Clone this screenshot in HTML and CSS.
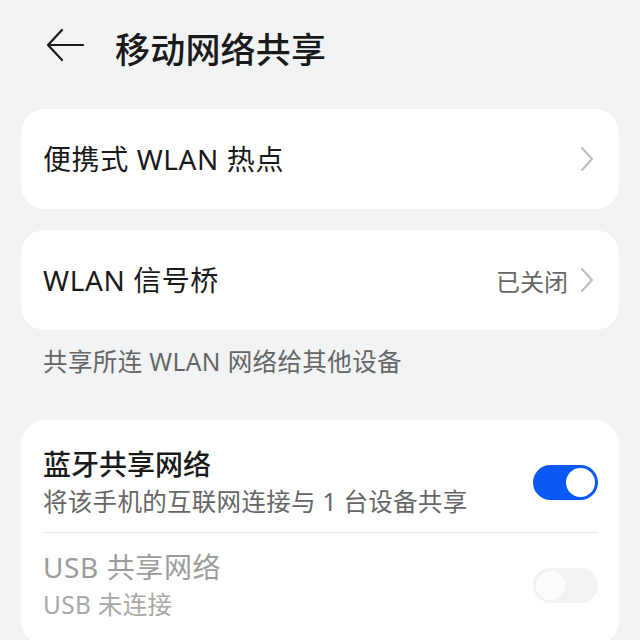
FILE: index.html
```html
<!DOCTYPE html>
<html lang="zh-CN">
<head>
  <meta charset="UTF-8">
  <meta name="viewport" content="width=device-width, initial-scale=1.0">
  <title>移动网络共享</title>
  <link rel="stylesheet" href="styles.css">
</head>
<body>
<div class="page">
  <header class="topbar">
    <svg class="back" width="38" height="36" viewBox="0 0 38 36">
      <path d="M16 2 L2 17 L16 32 M2 17 H37" fill="none" stroke="#1a1a1a" stroke-width="2.2" stroke-linecap="round" stroke-linejoin="round"/>
    </svg>
    <h1 class="title">移动网络共享</h1>
  </header>

  <main class="content">
    <div class="card card-link">
      <span class="item-title">便携式 WLAN 热点</span>
      <span class="item-end">
        <svg class="chevron" width="14" height="26" viewBox="0 0 14 26">
          <path d="M2 2 L12 13 L2 24" fill="none" stroke="#bdbdbd" stroke-width="2" stroke-linecap="round" stroke-linejoin="round"/>
        </svg>
      </span>
    </div>

    <div class="card card-link">
      <span class="item-title">WLAN 信号桥</span>
      <span class="item-end">
        <span class="item-value">已关闭</span>
        <svg class="chevron" width="14" height="26" viewBox="0 0 14 26">
          <path d="M2 2 L12 13 L2 24" fill="none" stroke="#bdbdbd" stroke-width="2" stroke-linecap="round" stroke-linejoin="round"/>
        </svg>
      </span>
    </div>

    <p class="note">共享所连 WLAN 网络给其他设备</p>

    <div class="card card-list">
      <div class="row">
        <div class="row-text">
          <div class="item-title strong">蓝牙共享网络</div>
          <div class="item-sub">将该手机的互联网连接与 1 台设备共享</div>
        </div>
        <div class="switch on"><span class="knob"></span></div>
      </div>
      <div class="divider"></div>
      <div class="row disabled">
        <div class="row-text">
          <div class="item-title">USB 共享网络</div>
          <div class="item-sub">USB 未连接</div>
        </div>
        <div class="switch off"><span class="knob"></span></div>
      </div>
    </div>
  </main>
</div>
</body>
</html>
```

FILE: styles.css
```css
* {
  margin: 0;
  padding: 0;
  box-sizing: border-box;
}

body {
  font-family: "Noto Sans", "Noto Sans CJK SC", sans-serif;
  background: #f1f3f5;
  color: #1a1a1a;
  overflow: hidden;
}

.page {
  width: 640px;
  height: 640px;
}

.topbar {
  height: 94px;
  display: flex;
  align-items: center;
  padding-left: 46px;
}

.back {
  display: block;
  margin-top: -2px;
}

.title {
  margin-left: 31px;
  font-size: 35px;
  font-weight: 500;
  letter-spacing: 0.2px;
  color: #1a1a1a;
}

.content {
  padding: 15px 21px 0 21px;
}

.card {
  background: #ffffff;
  border-radius: 24px;
}

.card-link {
  height: 100px;
  display: flex;
  align-items: center;
  justify-content: space-between;
  padding: 0 25px 0 22px;
  margin-bottom: 21px;
}

.card-link + .card-link {
  margin-bottom: 0;
}

.item-title {
  font-size: 28px;
  line-height: 36px;
  letter-spacing: 0.6px;
  color: #1a1a1a;
}

.item-title.strong {
  font-weight: 500;
  letter-spacing: 0;
}

.item-end {
  display: flex;
  align-items: center;
  gap: 12px;
}

.item-value {
  font-size: 24px;
  color: #666666;
}

.chevron {
  display: block;
}

.note {
  margin-top: 16px;
  margin-bottom: 42px;
  padding-left: 22px;
  font-size: 24.5px;
  line-height: 32px;
  letter-spacing: 0.4px;
  color: #666666;
}

.card-list {
  padding: 10px 21px 10px 22px;
}

.row {
  display: flex;
  align-items: center;
  justify-content: space-between;
  padding: 16px 0 14px 0;
}

.item-sub {
  margin-top: 4px;
  font-size: 24.5px;
  line-height: 32px;
  letter-spacing: 0.3px;
  color: #666666;
}

.divider {
  height: 1px;
  background: #e6e6e6;
}

.row.disabled .item-title {
  color: #9c9c9c;
}

.row.disabled .item-sub {
  color: #a8a8a8;
}

.switch {
  width: 65px;
  height: 35px;
  border-radius: 18px;
  padding: 3px;
  display: flex;
}

.switch .knob {
  width: 29px;
  height: 29px;
  border-radius: 50%;
  background: #ffffff;
}

.switch.on {
  background: #0a59f7;
  justify-content: flex-end;
}

.switch.off {
  background: #f2f2f2;
  justify-content: flex-start;
}

.switch.off .knob {
  background: #fbfbfb;
}
```
